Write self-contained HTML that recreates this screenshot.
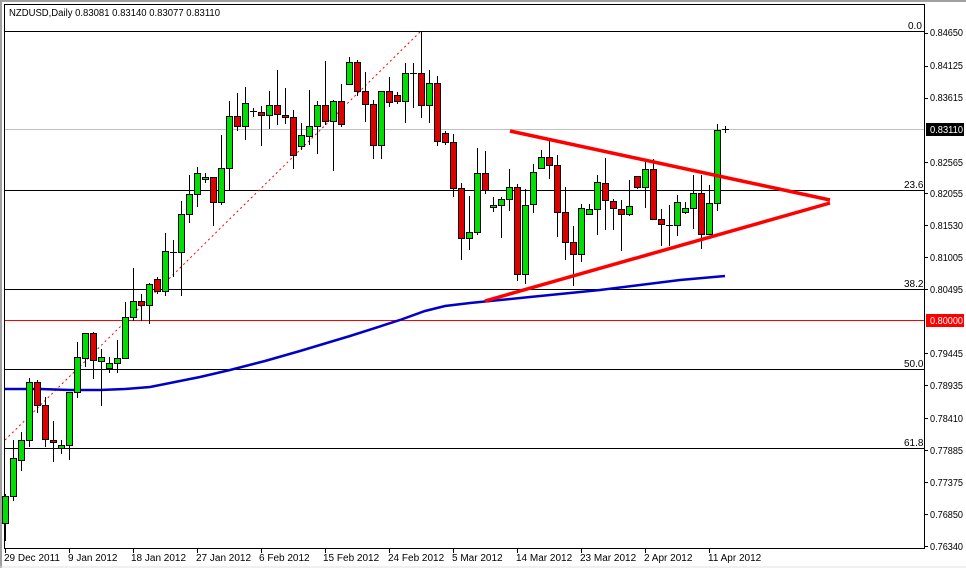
<!DOCTYPE html>
<html><head><meta charset="utf-8"><style>
html,body{margin:0;padding:0;background:#fff;width:966px;height:568px;overflow:hidden}
svg{display:block}
text{font-family:"Liberation Sans",sans-serif;font-size:10px;fill:#000}
</style></head><body>
<svg id="c" width="966" height="568" viewBox="0 0 966 568" xmlns="http://www.w3.org/2000/svg" shape-rendering="crispEdges">
<rect x="0" y="0" width="966" height="568" fill="#fff"/>
<line x1="0" y1="1" x2="966" y2="1" stroke="#a0a0a0" stroke-width="2"/>
<line x1="1" y1="0" x2="1" y2="568" stroke="#a0a0a0" stroke-width="2"/>
<line x1="0" y1="567" x2="966" y2="567" stroke="#e0e0e0" stroke-width="1"/>
<line x1="4" y1="4.5" x2="925" y2="4.5" stroke="#000"/>
<line x1="4.5" y1="4" x2="4.5" y2="548" stroke="#000"/>
<line x1="924.5" y1="4" x2="924.5" y2="549" stroke="#000"/>
<line x1="4" y1="548.5" x2="925" y2="548.5" stroke="#000"/>
<line x1="5" y1="31.5" x2="924" y2="31.5" stroke="#000"/>
<line x1="5" y1="190.5" x2="924" y2="190.5" stroke="#000"/>
<line x1="5" y1="289.5" x2="924" y2="289.5" stroke="#000"/>
<line x1="5" y1="369.5" x2="924" y2="369.5" stroke="#000"/>
<line x1="5" y1="448.5" x2="924" y2="448.5" stroke="#000"/>
<line x1="5" y1="129.5" x2="924" y2="129.5" stroke="#c0c0c0"/>
<line x1="5" y1="320.5" x2="924" y2="320.5" stroke="#f00"/>
<text x="908" y="29">0.0</text>
<text x="904" y="188">23.6</text>
<text x="904" y="287">38.2</text>
<text x="904" y="367">50.0</text>
<text x="904" y="446">61.8</text>
<line x1="5" y1="440" x2="421" y2="31" stroke="#f00" stroke-dasharray="2,3" shape-rendering="auto"/>
<polyline fill="none" stroke="#0000c8" stroke-width="2.5" shape-rendering="auto" points="5,389 40,389 70,390 100,390 125,389 150,387 175,382 200,377 230,370 265,361 300,351 350,336 400,320 425,311 445,306 470,303 500,300 530,297 560,294 600,290 640,285 680,280 725,276"/>
<g id="cd"></g>
<line x1="510" y1="131" x2="830" y2="200" stroke="#f00" stroke-width="3.5" shape-rendering="auto"/>
<line x1="485" y1="301" x2="830" y2="203" stroke="#f00" stroke-width="3.5" shape-rendering="auto"/>
<text x="9" y="16" textLength="211" lengthAdjust="spacingAndGlyphs">NZDUSD,Daily  0.83081 0.83140 0.83077 0.83110</text>
<g id="ticks"></g>
<g id="pl">
<text x="930" y="36" textLength="33" lengthAdjust="spacingAndGlyphs">0.84650</text>
<text x="930" y="69" textLength="33" lengthAdjust="spacingAndGlyphs">0.84125</text>
<text x="930" y="101" textLength="33" lengthAdjust="spacingAndGlyphs">0.83615</text>
<rect x="926" y="123" width="38" height="13" fill="#000"/>
<text x="930" y="133" textLength="33" lengthAdjust="spacingAndGlyphs" style="fill:#fff">0.83110</text>
<text x="930" y="166" textLength="33" lengthAdjust="spacingAndGlyphs">0.82565</text>
<text x="930" y="197" textLength="33" lengthAdjust="spacingAndGlyphs">0.82055</text>
<text x="930" y="229" textLength="33" lengthAdjust="spacingAndGlyphs">0.81530</text>
<text x="930" y="261" textLength="33" lengthAdjust="spacingAndGlyphs">0.81005</text>
<text x="930" y="293" textLength="33" lengthAdjust="spacingAndGlyphs">0.80495</text>
<rect x="926" y="314" width="38" height="13" fill="#f00"/>
<text x="930" y="324" textLength="33" lengthAdjust="spacingAndGlyphs" style="fill:#fff">0.80000</text>
<text x="930" y="357" textLength="33" lengthAdjust="spacingAndGlyphs">0.79445</text>
<text x="930" y="389" textLength="33" lengthAdjust="spacingAndGlyphs">0.78935</text>
<text x="930" y="422" textLength="33" lengthAdjust="spacingAndGlyphs">0.78410</text>
<text x="930" y="454" textLength="33" lengthAdjust="spacingAndGlyphs">0.77885</text>
<text x="930" y="486" textLength="33" lengthAdjust="spacingAndGlyphs">0.77375</text>
<text x="930" y="518" textLength="33" lengthAdjust="spacingAndGlyphs">0.76850</text>
<text x="930" y="550" textLength="33" lengthAdjust="spacingAndGlyphs">0.76340</text>
</g>
<text x="4" y="561">29 Dec 2011</text>
<text x="68" y="561">9 Jan 2012</text>
<text x="131" y="561">18 Jan 2012</text>
<text x="196" y="561">27 Jan 2012</text>
<text x="259" y="561">6 Feb 2012</text>
<text x="323" y="561">15 Feb 2012</text>
<text x="388" y="561">24 Feb 2012</text>
<text x="452" y="561">5 Mar 2012</text>
<text x="516" y="561">14 Mar 2012</text>
<text x="580" y="561">23 Mar 2012</text>
<text x="644" y="561">2 Apr 2012</text>
<text x="708" y="561">11 Apr 2012</text>
</svg>
<script>
var D=[
"g 496 523 494 540","g 458 496 440 500","g 440 460 432 470","g 382 440 378 446","r 382 405 380 412","r 405 439 397 446","r 440 442 421 461","g 445 448 440 453","g 392 445 392 459","g 357 392 342 397",
"g 333 358 333 366","r 333 360 332 378","g 357 361 349 405","g 363 368 357 372","g 358 363 340 372","g 317 358 302 358","g 301 317 268 320","r 301 305 294 320","g 284 305 283 323","r 279 291 277 293",
"g 251 291 233 295","x 252 252 240 276","g 214 252 201 295","g 194 214 175 222","g 173 194 167 206","g 177 179 173 182","r 177 202 177 225","g 168 202 135 204","g 116 168 101 190","r 116 126 93 130",
"g 103 126 87 139","x 111 111 108 116","r 112 115 106 145","g 105 115 91 128","r 105 114 70 124","r 115 117 88 123","r 117 155 110 168","g 135 146 123 149","g 126 136 90 144","g 105 126 101 153",
"r 105 121 61 124","g 101 121 100 170","r 101 124 84 126","g 62 84 57 84","r 62 91 60 95","r 91 104 72 121","r 104 145 100 158","g 91 145 91 158","r 91 102 77 106","r 95 101 92 103",
"g 73 101 63 122","x 73 73 63 107","r 73 105 32 117","g 83 105 70 122","r 83 141 76 145","r 133 142 131 144","r 142 188 134 196","r 188 238 183 259","g 232 238 196 249","g 173 232 148 234",
"r 173 190 151 193","g 205 207 197 211","g 199 205 197 237","g 187 199 169 210","r 187 274 184 280","g 205 274 189 283","g 172 204 164 212","g 157 168 150 168","r 157 165 140 178","r 165 212 155 236",
"r 212 242 187 259","r 242 254 226 285","g 208 254 204 261","g 209 214 204 214","g 182 209 175 234","r 183 200 158 229","r 201 208 199 229","r 209 214 200 250","g 206 214 180 215","r 176 187 176 188",
"g 169 187 161 207","r 169 219 159 219","r 219 224 209 245","x 225 225 205 245","g 202 225 195 235","g 208 212 202 213","g 193 208 175 228","r 193 234 175 248","g 203 234 185 234","g 130 203 124 210",
"x 129 129 126 132"];
var s="";
D.forEach(function(r,i){var p=r.split(" "),x=5+8*i,c=p[0],bt=+p[1],bb=+p[2],wt=+p[3],wb=+p[4];
s+='<line x1="'+(x+.5)+'" y1="'+wt+'" x2="'+(x+.5)+'" y2="'+(wb+1)+'" stroke="#000"/>';
if(c=="x"){s+='<line x1="'+(x-3)+'" y1="'+(bt+.5)+'" x2="'+(x+4)+'" y2="'+(bt+.5)+'" stroke="#000"/>';}
else{s+='<rect x="'+(x-2.5)+'" y="'+(bt+.5)+'" width="6" height="'+Math.max(bb-bt,2)+'" fill="'+(c=="g"?"#00e000":"#e00000")+'" stroke="#000"/>';}
});
document.getElementById("cd").innerHTML=s;
var t="";[33,66,98,162,193,225,257,289,353,385,418,450,482,514,546].forEach(function(y){t+='<line x1="925" y1="'+(y+.5)+'" x2="928" y2="'+(y+.5)+'" stroke="#000"/>';});
[5,69,133,197,261,325,389,453,517,581,645,709].forEach(function(x){t+='<line x1="'+(x+.5)+'" y1="549" x2="'+(x+.5)+'" y2="553" stroke="#000"/>';});
document.getElementById("ticks").innerHTML=t;
</script>
</body></html>
